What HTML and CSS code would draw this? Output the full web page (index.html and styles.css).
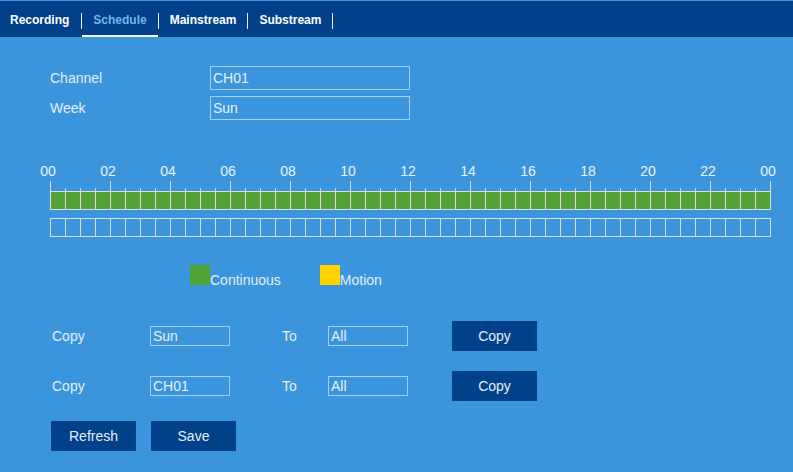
FILE: index.html
```html
<!DOCTYPE html>
<html lang="en">
<head>
<meta charset="utf-8">
<title>Schedule</title>
<link rel="stylesheet" href="styles.css">
</head>
<body>
<nav class="tabs">
  <a class="tab first">Recording</a><span class="sep"></span>
  <a class="tab active">Schedule</a><span class="sep"></span>
  <a class="tab">Mainstream</a><span class="sep"></span>
  <a class="tab">Substream</a><span class="sep"></span>
</nav>
<main class="content">
  <div class="form">
    <div class="form-row"><span class="label">Channel</span><span class="field wide">CH01</span></div>
    <div class="form-row"><span class="label">Week</span><span class="field wide">Sun</span></div>
  </div>

  <div class="timeline">
    <div class="hours">
      <span class="hour"><span>00</span></span>
      <span class="hour"><span>02</span></span>
      <span class="hour"><span>04</span></span>
      <span class="hour"><span>06</span></span>
      <span class="hour"><span>08</span></span>
      <span class="hour"><span>10</span></span>
      <span class="hour"><span>12</span></span>
      <span class="hour"><span>14</span></span>
      <span class="hour"><span>16</span></span>
      <span class="hour"><span>18</span></span>
      <span class="hour"><span>20</span></span>
      <span class="hour"><span>22</span></span>
      <span class="hour last"><span>00</span></span>
    </div>
    <div class="ticks"></div>
    <div class="track continuous"></div>
    <div class="track motion"></div>
  </div>

  <div class="legend">
    <span class="swatch green"></span><span class="legend-text">Continuous</span>
    <span class="swatch yellow"></span><span class="legend-text">Motion</span>
  </div>

  <div class="copy-row first-copy">
    <span class="copy-label">Copy</span>
    <span class="field small">Sun</span>
    <span class="to-label">To</span>
    <span class="field small">All</span>
    <button class="btn copy-btn">Copy</button>
  </div>
  <div class="copy-row">
    <span class="copy-label">Copy</span>
    <span class="field small">CH01</span>
    <span class="to-label">To</span>
    <span class="field small">All</span>
    <button class="btn copy-btn">Copy</button>
  </div>

  <div class="actions">
    <button class="btn">Refresh</button>
    <button class="btn">Save</button>
  </div>
</main>
</body>
</html>
```

FILE: styles.css
```css
html, body {
  margin: 0;
  padding: 0;
  overflow: hidden;
}
body {
  background: #3b95dc;
  font-family: "Liberation Sans", Arial, sans-serif;
  color: #e6eef8;
  padding-top: 1px;
  height: 471px;
}
.tabs {
  display: flex;
  align-items: center;
  box-sizing: border-box;
  height: 36px;
  padding-top: 3px;
  background: #00418a;
}
.tab {
  height: 33px;
  line-height: 33px;
  padding: 0 11px;
  font-size: 12px;
  font-weight: bold;
  color: #ffffff;
  box-sizing: border-box;
  cursor: pointer;
}
.tab.first {
  padding-left: 10px;
  padding-right: 12px;
}
.tab.active {
  color: #72b5ea;
  box-shadow: inset 0 -2px 0 #f4f4f4;
}
.sep {
  width: 1px;
  height: 16px;
  background: #f0f0f0;
}
.content {
  padding-left: 50px;
}
.form {
  margin-top: 29px;
  display: flex;
  flex-direction: column;
  gap: 6px;
}
.form-row {
  display: flex;
  align-items: center;
  height: 24px;
}
.label {
  width: 160px;
  font-size: 14px;
}
.field {
  box-sizing: border-box;
  border: 1px solid #a3cff2;
  padding-left: 2px;
  font-size: 14px;
  color: #e8f0f8;
}
.field.wide {
  width: 200px;
  height: 24px;
  line-height: 22px;
}
.field.small {
  width: 80px;
  height: 20px;
  line-height: 18px;
}
.timeline {
  margin-top: 43px;
}
.hours {
  display: flex;
  height: 18px;
  line-height: 16px;
  font-size: 14px;
  color: #e8f2fc;
}
.hour {
  flex: 0 0 60px;
}
.hour.last {
  flex: 0 0 auto;
}
.hour span {
  display: inline-block;
  transform: translateX(calc(-50% - 2px));
}
.ticks {
  width: 721px;
  height: 10px;
  background:
    repeating-linear-gradient(90deg, #dcdcdc 0 1px, transparent 1px 60px) 0 0 / 100% 100% no-repeat,
    repeating-linear-gradient(90deg, #dcdcdc 0 1px, transparent 1px 15px) 0 100% / 100% 3px no-repeat;
}
.track {
  box-sizing: border-box;
  width: 721px;
  height: 19px;
  border-top: 1px solid #dcdcdc;
  border-bottom: 1px solid #dcdcdc;
  background: repeating-linear-gradient(90deg, #dcdcdc 0 1px, transparent 1px 15px);
}
.track.continuous {
  background-color: #53a236;
}
.track.motion {
  margin-top: 8px;
}
.legend {
  margin-top: 28px;
  height: 20px;
  padding-left: 140px;
  display: flex;
  align-items: baseline;
  font-size: 14px;
  line-height: 16px;
}
.swatch {
  width: 20px;
  height: 20px;
}
.swatch.green {
  background: #53a236;
}
.swatch.yellow {
  background: #ffd200;
  margin-left: 39px;
}
.copy-row {
  display: flex;
  align-items: center;
  height: 30px;
  margin-top: 20px;
  font-size: 14px;
}
.copy-row.first-copy {
  margin-top: 36px;
}
.copy-label {
  width: 98px;
  padding-left: 2px;
}
.to-label {
  margin-left: 52px;
  width: 46px;
}
.btn {
  width: 85px;
  height: 30px;
  border: none;
  background: #00418a;
  color: #e6eef8;
  font-family: "Liberation Sans", Arial, sans-serif;
  font-size: 14px;
  padding: 0;
  cursor: pointer;
}
.copy-btn {
  margin-left: 44px;
}
.actions {
  display: flex;
  gap: 15px;
  margin-top: 20px;
  padding-left: 1px;
}
```
